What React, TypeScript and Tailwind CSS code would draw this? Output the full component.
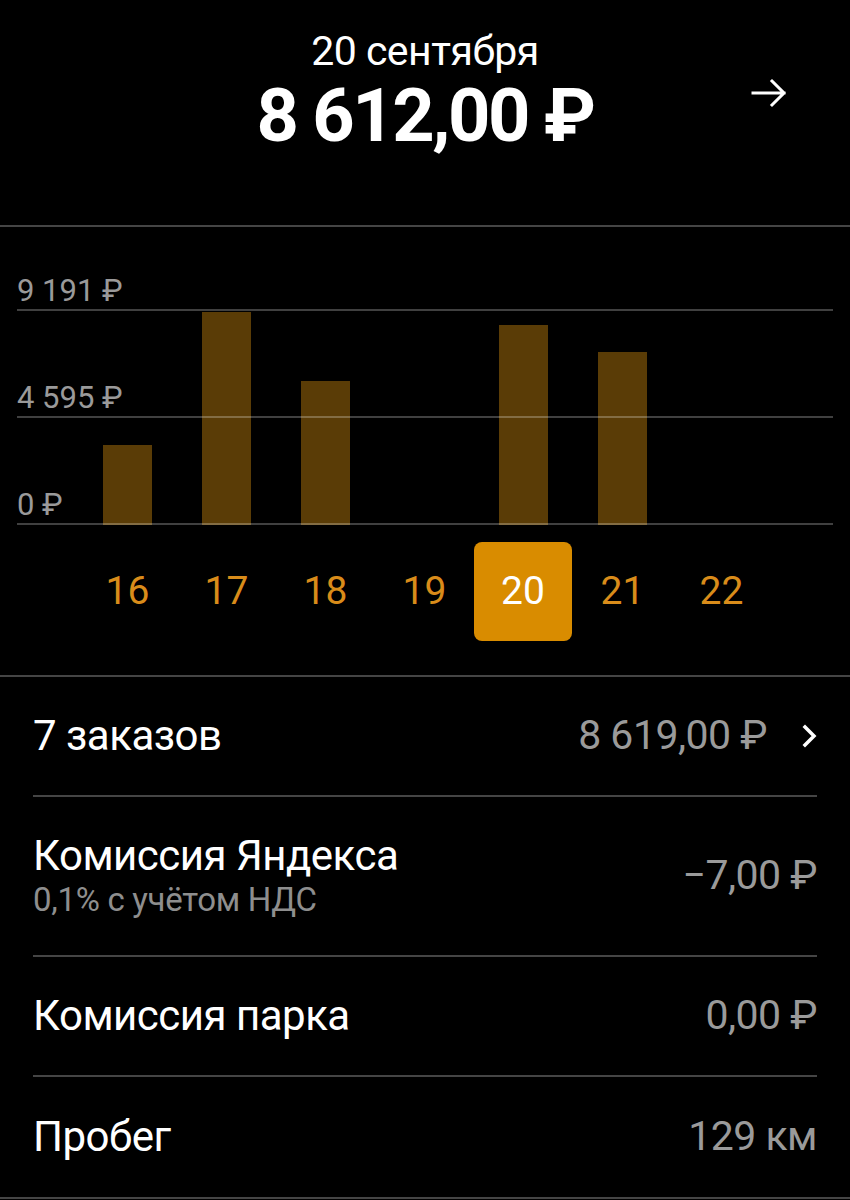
import React from 'react';

const DAYS = [
  { day: 16, value: 3450 },
  { day: 17, value: 9191 },
  { day: 18, value: 6210 },
  { day: 19, value: 0 },
  { day: 20, value: 8612 },
  { day: 21, value: 7470 },
  { day: 22, value: 0 },
];

const MAX = 9191;
const BAR_AREA = 213;

const TICKS = ['9 191 ₽', '4 595 ₽', '0 ₽'];

const ROWS = [
  { title: '7 заказов', value: '8 619,00 ₽', chevron: true },
  { title: 'Комиссия Яндекса', sub: '0,1% с учётом НДС', value: '−7,00 ₽' },
  { title: 'Комиссия парка', value: '0,00 ₽' },
  { title: 'Пробег', value: '129 км' },
];

function ArrowIcon() {
  return (
    <svg width="36" height="30" viewBox="0 0 36 30" fill="none">
      <path d="M2 15H33M21 3L33 15L21 27" stroke="white" strokeWidth="3" strokeLinecap="square" />
    </svg>
  );
}

function Chevron() {
  return (
    <svg width="18" height="24" viewBox="0 0 18 24" fill="none">
      <path d="M4 3L13 12L4 21" stroke="white" strokeWidth="3.5" strokeLinecap="square" />
    </svg>
  );
}

export default function App() {
  return (
    <div className="min-h-[1200px] w-[850px] bg-black text-white" style={{ fontFamily: 'Roboto, "Noto Sans", sans-serif' }}>
      {/* Header */}
      <div className="relative flex h-[227px] flex-col items-center border-b-2 border-[#454545] pt-[26px]">
        <div className="text-[41px] leading-[50px] tracking-[-0.5px]">20 сентября</div>
        <div className="text-[74px] font-bold leading-[80px] tracking-[-2.5px]">8 612,00 ₽</div>
        <div className="absolute right-[63px] top-[78px]">
          <ArrowIcon />
        </div>
      </div>

      {/* Chart */}
      <div className="border-b-2 border-[#454545] pb-[34px]">
        <div className="relative px-[17px] pt-[46px]">
          <div className="absolute bottom-0 left-[78px] flex h-[213px] items-end">
            {DAYS.map((d) => (
              <div key={d.day} className="flex w-[99px] justify-center">
                <div
                  className="w-[49px] bg-[#5a3c06]"
                  style={{ height: Math.round((d.value / MAX) * BAR_AREA) }}
                />
              </div>
            ))}
          </div>
          <div className="relative flex flex-col">
            {TICKS.map((t, i) => (
              <div key={t} className={i === 0 ? '' : 'mt-[69px]'}>
                <div className="text-[31px] leading-[36px] text-[#9a9a9a]">{t}</div>
                <div className="h-[2px] bg-white/25" />
              </div>
            ))}
          </div>
        </div>
        <div className="mt-[17px] flex pl-[78px]">
          {DAYS.map((d) => (
            <div
              key={d.day}
              className={
                d.day === 20
                  ? 'mr-[1px] flex h-[99px] w-[98px] items-center justify-center rounded-[8px] bg-[#d98c00] text-[39px] text-white'
                  : 'flex h-[99px] w-[99px] items-center justify-center text-[39px] text-[#d98c1a]'
              }
            >
              {d.day}
            </div>
          ))}
        </div>
      </div>

      {/* Rows */}
      <div className="border-b-2 border-[#454545]">
        <div className="px-[33px]">
          {ROWS.map((r, i) => (
            <div
              key={r.title}
              className={
                'flex items-center justify-between ' +
                (r.sub ? 'h-[160px] ' : 'h-[120px] ') +
                (i < ROWS.length - 1 ? 'border-b-2 border-[#454545]' : '')
              }
            >
              <div className="flex flex-col">
                <div className="text-[42px] leading-[48px] tracking-[-0.5px]">{r.title}</div>
                {r.sub && <div className="text-[33px] leading-[40px] tracking-[-0.3px] text-[#8e8e8e]">{r.sub}</div>}
              </div>
              <div className="flex items-center">
                <div className="text-[41px] tracking-[-0.5px] text-[#9a9a9a]">{r.value}</div>
                {r.chevron && (
                  <div className="ml-[34px] mr-[-2px]">
                    <Chevron />
                  </div>
                )}
              </div>
            </div>
          ))}
        </div>
      </div>
    </div>
  );
}
